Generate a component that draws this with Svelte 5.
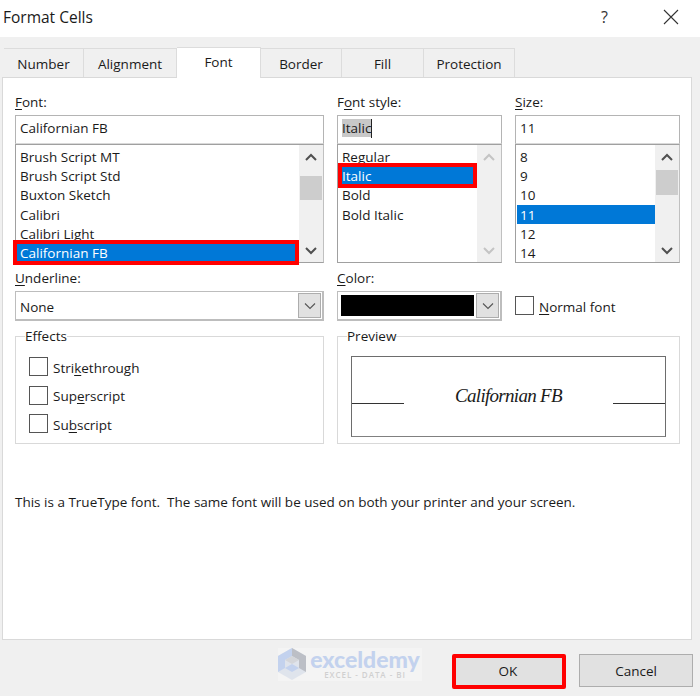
<script>
	const fonts = ['Brush Script MT', 'Brush Script Std', 'Buxton Sketch', 'Calibri', 'Calibri Light', 'Californian FB'];
	const styles = ['Regular', 'Italic', 'Bold', 'Bold Italic'];
	const sizes = ['8', '9', '10', '11', '12', '14'];
	const tabs = ['Number', 'Alignment', 'Font', 'Border', 'Fill', 'Protection'];
</script>

{#snippet chevron(up)}
	<svg class="chev" width="14" height="10" viewBox="0 0 14 10">
		<path d={up ? 'M2 8 L7 3 L12 8' : 'M2 2 L7 7 L12 2'} fill="none" stroke="currentColor" stroke-width="2" />
	</svg>
{/snippet}

{#snippet scrollbar(width, top, height, disabled)}
	<div class="scroll" class:disabled style="width: {width}px">
		<div class="arrow">{@render chevron(true)}</div>
		<div class="track">
			{#if height}
				<div class="thumb" style="margin-top: {top}px; height: {height}px"></div>
			{/if}
		</div>
		<div class="arrow">{@render chevron(false)}</div>
	</div>
{/snippet}

{#snippet dropdown()}
	<div class="drop">
		<svg width="12" height="8" viewBox="0 0 12 8">
			<path d="M1 1.5 L6 6.5 L11 1.5" fill="none" stroke="#555" stroke-width="1.1" />
		</svg>
	</div>
{/snippet}

<div class="dialog">
	<header class="titlebar">
		<span class="title">Format Cells</span>
		<span class="help">?</span>
		<svg class="close" width="16" height="16" viewBox="0 0 16 16">
			<path d="M1 1 L15 15 M15 1 L1 15" stroke="#333" stroke-width="1.1" fill="none" />
		</svg>
	</header>

	<main class="body">
		<nav class="tabs">
			{#each tabs as tab}
				<div class="tab tab-{tab.toLowerCase()}" class:active={tab === 'Font'}>{tab}</div>
			{/each}
		</nav>

		<section class="panel">
			<div class="grid">
				<div class="field">
					<div class="label"><u>F</u>ont:</div>
					<div class="input">Californian FB</div>
					<div class="list">
						<div class="rows">
							{#each fonts as f}
								<div class="row" class:marked={f === 'Californian FB'}>{f}</div>
							{/each}
						</div>
						{@render scrollbar(24, 8, 24, false)}
					</div>
				</div>

				<div class="field">
					<div class="label">F<u>o</u>nt style:</div>
					<div class="input"><span class="sel">Italic</span><span class="caret"></span></div>
					<div class="list">
						<div class="rows">
							{#each styles as s}
								<div class="row" class:marked={s === 'Italic'}>{s}</div>
							{/each}
						</div>
						{@render scrollbar(24, 0, 0, true)}
					</div>
				</div>

				<div class="field">
					<div class="label"><u>S</u>ize:</div>
					<div class="input">11</div>
					<div class="list">
						<div class="rows">
							{#each sizes as s}
								<div class="row" class:selected={s === '11'}>{s}</div>
							{/each}
						</div>
						{@render scrollbar(24, 2, 25, false)}
					</div>
				</div>

				<div class="field">
					<div class="label"><u>U</u>nderline:</div>
					<div class="combo">
						<span class="combo-text">None</span>
						{@render dropdown()}
					</div>
				</div>

				<div class="field">
					<div class="label"><u>C</u>olor:</div>
					<div class="combo">
						<span class="swatch"></span>
						{@render dropdown()}
					</div>
				</div>

				<div class="field normal">
					<label class="check"><span class="box"></span><span class="check-text"><u>N</u>ormal font</span></label>
				</div>

				<fieldset class="group">
					<legend>Effects</legend>
					<label class="check"><span class="box"></span><span class="check-text">Stri<u>k</u>ethrough</span></label>
					<label class="check"><span class="box"></span><span class="check-text">Sup<u>e</u>rscript</span></label>
					<label class="check"><span class="box"></span><span class="check-text">Su<u>b</u>script</span></label>
				</fieldset>

				<fieldset class="group preview">
					<legend>Preview</legend>
					<div class="sample">
						<span class="rule"></span>
						<span class="sample-text">Californian FB</span>
						<span class="rule"></span>
					</div>
				</fieldset>
			</div>

			<p class="note">This is a TrueType font.  The same font will be used on both your printer and your screen.</p>
		</section>

		<footer class="footer">
			<div class="watermark">
				<svg width="28" height="32" viewBox="0 0 28 32">
					<path d="M14 0 L28 8 V24 L14 32 L0 24 V8 Z" fill="#dfe4ec" />
					<path d="M14 0 V8 L7 12 V20 L0 24 V8 Z" fill="#c3d2ee" />
					<path d="M14 0 L28 8 V24 L21 20 V12 L14 8 Z" fill="#bcbfc6" />
					<path d="M7 12 L14 8 L21 12 L14 16 Z" fill="#d4d6da" />
					<path d="M7 20 L14 16 L21 20 L14 24 Z" fill="#c3d2ee" />
				</svg>
				<div class="wm-text">
					<span class="wm-name">exceldemy</span>
					<span class="wm-sub">EXCEL - DATA - BI</span>
				</div>
			</div>
			<button class="btn ok">OK</button>
			<button class="btn">Cancel</button>
		</footer>
	</main>
</div>

<style>
	:global(body) {
		background: #f0f0f0;
	}
	.dialog {
		width: 700px;
		height: 696px;
		display: flex;
		flex-direction: column;
		font-family: "Open Sans", "Noto Sans", sans-serif;
		font-size: 13.5px;
		color: #1a1a1a;
		overflow: hidden;
	}
	u {
		text-underline-offset: 2px;
		text-decoration-thickness: 1px;
	}
	.titlebar {
		height: 37px;
		flex: none;
		background: #fff;
		display: flex;
		align-items: center;
		padding: 0 21px 4px 3px;
		box-sizing: border-box;
	}
	.title {
		font-size: 15.5px;
		flex: 1;
	}
	.help {
		font-size: 16px;
		color: #333;
		margin-right: 55px;
	}
	.close {
		display: block;
	}
	.body {
		flex: 1;
		background: #f0f0f0;
		display: flex;
		flex-direction: column;
		padding: 11px 8px 0 2px;
		min-height: 0;
	}
	.tabs {
		display: flex;
		padding-left: 2px;
		height: 29px;
		align-items: flex-end;
		position: relative;
		z-index: 1;
	}
	.tab {
		height: 29px;
		box-sizing: border-box;
		border: 1px solid #dcdcdc;
		border-left: none;
		border-bottom: none;
		display: flex;
		align-items: center;
		justify-content: center;
		padding-top: 2px;
		background: #f0f0f0;
	}
	.tab-number { width: 80px; }
	.tab-alignment { width: 93px; }
	.tab-font { width: 84px; }
	.tab-border { width: 81px; }
	.tab-fill { width: 82px; }
	.tab-protection { width: 91px; }
	.tab.active {
		height: 31px;
		background: #fff;
		margin-bottom: -1px;
		padding-top: 0;
		padding-bottom: 3px;
	}
	.panel {
		height: 563px;
		box-sizing: border-box;
		background: #fff;
		border: 1px solid #d9d9d9;
		padding: 14px 11px 0 12px;
	}
	.grid {
		display: grid;
		grid-template-columns: 309px 165px 165px;
		column-gap: 13px;
		align-items: start;
	}
	.label {
		height: 23px;
		line-height: 20px;
	}
	.input {
		height: 29px;
		box-sizing: border-box;
		border: 1px solid #b4b4b4;
		border-bottom-color: #d9d9d9;
		padding: 0 4px 3px;
		display: flex;
		align-items: center;
	}
	.sel {
		background: #c8c8c8;
	}
	.caret {
		width: 1px;
		height: 19px;
		background: #222;
	}
	.list {
		height: 119px;
		box-sizing: border-box;
		border: 1px solid #8e8e8e;
		border-color: #a0a0a0 #c0c0c0 #a0a0a0 #a0a0a0;
		display: flex;
		padding-top: 2px;
		margin-bottom: 5px;
	}
	.rows {
		flex: 1;
		min-width: 0;
	}
	.row {
		height: 19.2px;
		line-height: 20px;
		padding-left: 4px;
		white-space: nowrap;
	}
	.row.selected {
		background: #0078d7;
		color: #fff;
		margin-left: 1px;
		padding-left: 3px;
	}
	.row.marked {
		background: #0078d7;
		color: #fff;
		outline: 4px solid #f00;
		outline-offset: -1px;
		margin: 0 3px 0 0;
		position: relative;
	}
	.grid > .field:nth-child(2) .row.marked {
		margin-left: 3px;
		padding-left: 1px;
	}
	.scroll {
		flex: none;
		display: flex;
		flex-direction: column;
		background: #f0f0f0;
		margin-top: -2px;
		color: #505050;
	}
	.scroll.disabled {
		color: #c4c4c4;
	}
	.arrow {
		height: 23px;
		flex: none;
		display: flex;
		align-items: center;
		justify-content: center;
	}
	.chev {
		display: block;
	}
	.track {
		flex: 1;
		padding: 0 1px 0 1px;
	}
	.thumb {
		background: #cdcdcd;
	}
	.combo {
		height: 30px;
		box-sizing: border-box;
		border: 1px solid #bdbdbd;
		border-width: 1px 2px 2px 1px;
		display: flex;
		align-items: stretch;
		padding: 1px;
	}
	.combo-text {
		flex: 1;
		display: flex;
		align-items: center;
		padding: 3px 0 0 3px;
	}
	.swatch {
		flex: 1;
		background: #000;
		margin: 2px;
	}
	.drop {
		width: 23px;
		flex: none;
		box-sizing: border-box;
		background: #e1e1e1;
		border: 1px solid #adadad;
		display: flex;
		align-items: center;
		justify-content: center;
	}
	.normal {
		padding-top: 28px;
	}
	.check {
		display: flex;
		align-items: center;
		gap: 5px;
		height: 19px;
	}
	.check-text {
		padding-top: 2px;
	}
	.box {
		width: 19px;
		height: 19px;
		box-sizing: border-box;
		border: 1px solid #555;
		background: #fff;
		flex: none;
	}
	.group {
		margin: 5px 0 0;
		padding: 11px 13px 0;
		border: 1px solid #d9d9d9;
		height: 118px;
		box-sizing: border-box;
		display: flex;
		flex-direction: column;
		gap: 9.5px;
		min-width: 0;
	}
	.preview {
		grid-column: span 2;
		padding-top: 10px;
	}
	.group legend {
		padding: 0;
		margin-left: -4px;
		line-height: 20px;
		background: #fff;
	}
	.sample {
		height: 81px;
		box-sizing: border-box;
		border: 1px solid #6d6d6d;
		border-bottom-color: #808080;
		display: flex;
		justify-content: space-between;
		align-items: center;
	}
	.rule {
		width: 52px;
		height: 1px;
		background: #333;
		margin-top: 14px;
	}
	.sample-text {
		font-family: "Liberation Serif", serif;
		font-style: italic;
		font-size: 19px;
		letter-spacing: -0.7px;
		margin-top: -1px;
	}
	.note {
		margin: 48px 0 0;
		line-height: 20px;
		white-space: pre-wrap;
	}
	.footer {
		flex: 1;
		display: flex;
		justify-content: flex-end;
		align-items: flex-start;
		gap: 13px;
		padding-top: 14px;
		position: relative;
		margin-right: -1px;
	}
	.btn {
		width: 114px;
		height: 33px;
		box-sizing: border-box;
		background: #e1e1e1;
		border: 1px solid #adadad;
		font: inherit;
		color: #1a1a1a;
		padding: 0;
	}
	.btn.ok {
		height: 35px;
		border: 4px solid #f00;
		border-radius: 2px;
		padding: 0 2px 1px 0;
	}
	.watermark {
		position: absolute;
		left: 276px;
		top: 8px;
		width: 144px;
		height: 33px;
		display: flex;
		gap: 4px;
		background: #f4f4f4;
	}
	.wm-text {
		display: flex;
		flex-direction: column;
		align-items: center;
		width: 110px;
	}
	.wm-name {
		font-family: Lato, sans-serif;
		font-weight: 900;
		font-size: 23px;
		line-height: 22px;
		color: #c3d2ee;
		white-space: nowrap;
	}
	.wm-sub {
		font-size: 8px;
		line-height: 9px;
		letter-spacing: 0.95px;
		color: #d0d0d0;
		font-weight: 600;
		white-space: nowrap;
	}
</style>
